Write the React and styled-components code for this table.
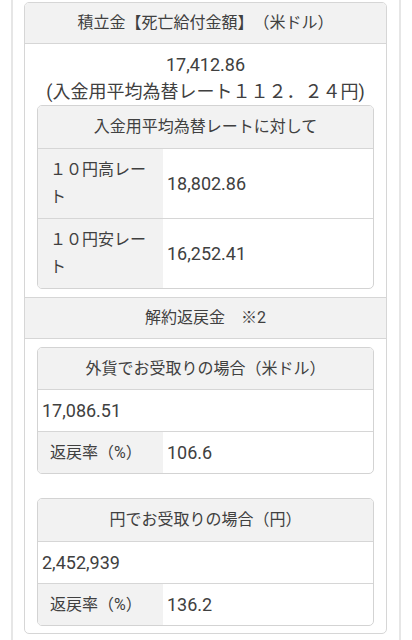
import React from "react";
import styled, { createGlobalStyle } from "styled-components";

const Global = createGlobalStyle`
  html, body { margin: 0; padding: 0; background: #fff; }
  body {
    font-family: Roboto, "Noto Sans CJK JP", "Noto Sans", sans-serif;
    color: #404040;
    text-spacing-trim: space-all;
    -webkit-font-smoothing: antialiased;
  }
`;

const Frame = styled.div`
  margin: 0 11px;
  min-height: 100vh;
  box-sizing: border-box;
  border-left: 2px solid #e6e6e6;
  border-right: 2px solid #e6e6e6;
  padding: 2px 12px 0 11px;
`;

const Card = styled.div`
  border: 1px solid #d6d6d6;
  border-radius: 5px;
  overflow: hidden;
  background: #fff;
`;

const SectionHead = styled.div`
  background: #f2f2f2;
  text-align: center;
  font-size: 16px;
  line-height: 28px;
  padding: 6px 8px;
  border-top: ${(p) => (p.$first ? "none" : "1px solid #d6d6d6")};
  border-bottom: 1px solid #d6d6d6;
`;

const SectionBody = styled.div`
  padding: ${(p) => p.$pad};
  display: flex;
  flex-direction: column;
  gap: ${(p) => p.$gap || "0px"};
`;

const BigText = styled.div`
  text-align: center;
  font-size: 18px;
  line-height: 27px;
`;

const Table = styled.div`
  border: 1px solid #d3d3d3;
  border-radius: 5px;
  overflow: hidden;
  background: #fff;
`;

const TableHead = styled.div`
  background: #f2f2f2;
  text-align: center;
  font-size: 16px;
  line-height: 27px;
  padding: 7px 8px 7.5px;
`;

const Row = styled.div`
  display: flex;
  border-top: 1px solid #d6d6d6;
`;

const Label = styled.div`
  flex: 0 0 125px;
  box-sizing: border-box;
  background: #f2f2f2;
  font-size: 16px;
  line-height: ${(p) => (p.$wrap ? "27.5px" : "27px")};
  padding: 7px 12px;
`;

const Value = styled.div`
  flex: 1;
  display: flex;
  align-items: center;
  font-size: 18px;
  line-height: 27px;
  padding: 7px 4px;
`;

export default function App() {
  return (
    <>
      <Global />
      <Frame>
        <Card>
          <SectionHead $first>積立金【死亡給付金額】（米ドル）</SectionHead>
          <SectionBody $pad="7px 12px 8px">
            <BigText>17,412.86</BigText>
            <BigText>(入金用平均為替レート１１２．２４円)</BigText>
            <Table>
              <TableHead>入金用平均為替レートに対して</TableHead>
              <Row>
                <Label $wrap>１０円高レート</Label>
                <Value>18,802.86</Value>
              </Row>
              <Row>
                <Label $wrap>１０円安レート</Label>
                <Value>16,252.41</Value>
              </Row>
            </Table>
          </SectionBody>
          <SectionHead>解約返戻金　※2</SectionHead>
          <SectionBody $pad="8px 12px 7px" $gap="24px">
            <Table>
              <TableHead>外貨でお受取りの場合（米ドル）</TableHead>
              <Row>
                <Value>17,086.51</Value>
              </Row>
              <Row>
                <Label>返戻率（%）</Label>
                <Value>106.6</Value>
              </Row>
            </Table>
            <Table>
              <TableHead>円でお受取りの場合（円）</TableHead>
              <Row>
                <Value>2,452,939</Value>
              </Row>
              <Row>
                <Label>返戻率（%）</Label>
                <Value>136.2</Value>
              </Row>
            </Table>
          </SectionBody>
        </Card>
      </Frame>
    </>
  );
}
